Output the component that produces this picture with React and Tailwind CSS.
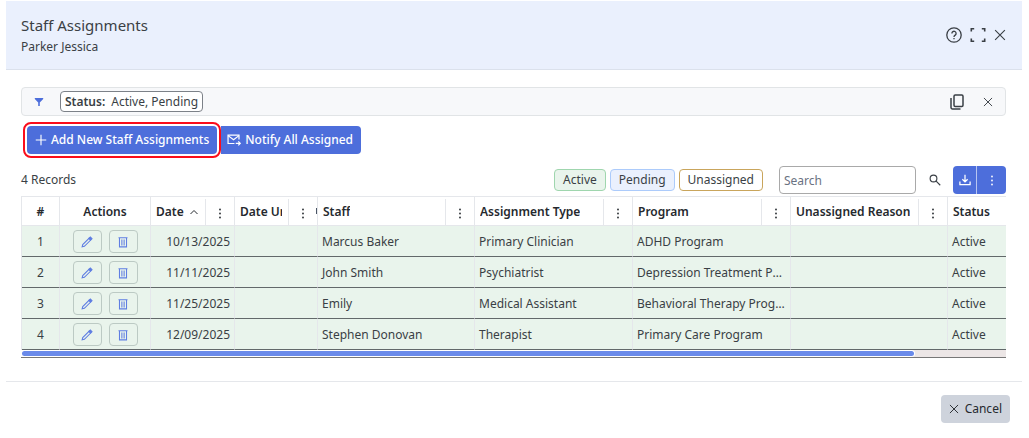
import { useState } from 'react'

const rows = [
  { id: 1, date: '10/13/2025', staff: 'Marcus Baker', type: 'Primary Clinician', program: 'ADHD Program' },
  { id: 2, date: '11/11/2025', staff: 'John Smith', type: 'Psychiatrist', program: 'Depression Treatment Program' },
  { id: 3, date: '11/25/2025', staff: 'Emily', type: 'Medical Assistant', program: 'Behavioral Therapy Program' },
  { id: 4, date: '12/09/2025', staff: 'Stephen Donovan', type: 'Therapist', program: 'Primary Care Program' },
]

function Icon({ size = 'size-4', width = 1.2, children }) {
  return (
    <svg
      viewBox="0 0 16 16"
      className={`${size} shrink-0`}
      fill="none"
      stroke="currentColor"
      strokeWidth={width}
      aria-hidden="true"
    >
      {children}
    </svg>
  )
}

const HelpIcon = () => (
  <Icon width={1.3}>
    <circle cx="8" cy="8" r="7.2" />
    <path d="M5.900 6.400a2.100 2.100 0 1 1 3.300 1.700C8.300 8.700 8 9 8 9.900" />
    <path d="M8 11v1.300" />
  </Icon>
)

const ExpandIcon = () => (
  <Icon width={1.6}>
    <path d="M1.300 4.500V1.700h2.900M11.800 1.700h2.900v2.800M14.700 11.500v2.800h-2.900M4.200 14.300H1.300v-2.800" />
  </Icon>
)

const CloseIcon = ({ size }) => (
  <Icon size={size} width={1.5}>
    <path d="M1.500 1.500l13 13M14.500 1.500l-13 13" />
  </Icon>
)

const CopyIcon = () => (
  <Icon width={1.5}>
    <rect x="5" y="1" width="9" height="11.500" rx="1.200" />
    <path d="M2 4v9.500a1.400 1.400 0 0 0 1.400 1.400h8.100" />
  </Icon>
)

const DotsIcon = () => (
  <svg viewBox="0 0 12 12" className="size-3 shrink-0" fill="currentColor" aria-hidden="true">
    <circle cx="6" cy="2.500" r="0.900" />
    <circle cx="6" cy="6.500" r="0.900" />
    <circle cx="6" cy="10.500" r="0.900" />
  </svg>
)

const PencilIcon = () => (
  <Icon size="size-3" width={1.4}>
    <path d="M1.500 14.500l.8-3L11 2.800l2.200 2.200-8.700 8.700z" />
    <path d="M10.500 3.300l2-2 2.200 2.200-2 2z" fill="currentColor" />
  </Icon>
)

const TrashIcon = () => (
  <Icon size="size-3" width={1.4}>
    <path d="M2 2.300h12M3.300 2.500v12h9.400v-12M6.500 4.500v8M9.500 4.500v8" />
  </Icon>
)

const MailIcon = () => (
  <Icon size="size-3.5" width={1.4}>
    <path d="M8.500 12H1.200V2.500h12.500v5" />
    <path d="M1.200 3l6.300 4.800 6.200-4.800" />
    <path d="M10 11.800h5M12.900 9.500l2.300 2.300-2.300 2.300" />
  </Icon>
)

function HeadCell({ label, sorted, clipped }) {
  return (
    <th scope="col" className="border-r border-b border-gray-200 p-0">
      <div className="flex h-full items-center">
        <span className="flex min-w-0 flex-1 items-center gap-1.5 pt-0.5 pr-1.5 pl-[5px]">
          <span className="min-w-0 overflow-hidden whitespace-nowrap">{label}</span>
          {sorted && (
            <Icon size="size-2" width={2}>
              <path d="M1 12l7-7 7 7" />
            </Icon>
          )}
        </span>
        <button
          type="button"
          aria-label={`${label} column menu`}
          className="flex h-[26px] w-[29px] items-center justify-center self-end border-l border-gray-200 pt-0.5"
        >
          <DotsIcon />
        </button>
        {clipped && <span className="-ml-px h-1.5 w-px bg-gray-600" />}
      </div>
    </th>
  )
}

export default function App() {
  const [search, setSearch] = useState('')

  return (
    <div className="mr-[7px] ml-1.5 pt-px font-['Noto_Sans',sans-serif] text-[12px] leading-4 text-[#3a3f45]">
      <header className="flex items-center justify-between border-b border-[#dbe1ec] bg-[#eaf0fd] py-3 pr-4 pl-[15px]">
        <div>
          <h1 className="text-[15px] leading-6">Staff Assignments</h1>
          <p className="leading-5">Parker Jessica</p>
        </div>
        <div className="flex items-center gap-2">
          <button type="button" aria-label="Help"><HelpIcon /></button>
          <button type="button" aria-label="Full screen"><ExpandIcon /></button>
          <button type="button" aria-label="Close"><CloseIcon size="size-3" /></button>
        </div>
      </header>

      <main className="pt-[17px] pr-4 pl-[15px]">
        <div className="flex h-[29px] items-center rounded-sm border border-[#e1e4e6] bg-[#f7f8fa] pr-3 pl-3">
          <svg viewBox="0 0 10 10" className="size-2.5 shrink-0 text-[#4d6edb]" fill="currentColor" aria-hidden="true">
            <path d="M.8 1h8.400v1L5.800 5.500V9H4.200V5.500L.8 2z" />
          </svg>
          <span className="ml-4 flex h-[21px] items-center gap-1.5 rounded border border-[#7c8188] bg-white px-1">
            <b className="font-semibold">Status:</b>
            Active, Pending
          </span>
          <button type="button" aria-label="Copy filter" className="ml-auto"><CopyIcon /></button>
          <button type="button" aria-label="Clear filter" className="ml-[18px]"><CloseIcon size="size-2.5" /></button>
        </div>

        <div className="mt-1.5 flex items-center">
          <div className="ml-0.5 rounded-lg border-2 border-[#fb0d1b] p-0.5">
            <button type="button" className="flex h-7 items-center gap-1 rounded bg-[#4d6edb] px-2 font-medium text-white">
              <Icon size="size-3" width={1.5}>
                <path d="M8 1v14M1 8h14" />
              </Icon>
              Add New Staff Assignments
            </button>
          </div>
          <button type="button" className="flex h-7 items-center gap-1 rounded-r bg-[#4d6edb] pr-2 pl-1.5 font-medium text-white">
            <MailIcon />
            Notify All Assigned
          </button>
        </div>

        <div className="mt-2 mb-0.5 flex h-7 items-center">
          <span>4 Records</span>
          <div className="ml-auto flex items-center gap-1">
            <span className="rounded border border-[#9fd6ae] bg-[#e9f4ec] px-2 py-0.5">Active</span>
            <span className="rounded border border-[#accbfb] bg-[#eaf0fd] px-2 py-0.5">Pending</span>
            <span className="rounded border border-[#c9a55c] bg-white px-2 py-0.5">Unassigned</span>
          </div>
          <input
            type="text"
            aria-label="Search"
            placeholder="Search"
            value={search}
            onChange={e => setSearch(e.target.value)}
            className="ml-4 h-7 w-[137px] rounded border border-[#a9a9a9] px-1 placeholder:text-gray-500"
          />
          <button type="button" aria-label="Run search" className="flex w-[37px] justify-center">
            <Icon size="size-3" width={1.5}>
              <circle cx="6" cy="6" r="4.500" />
              <path d="M9.500 9.500l5.500 5.500" />
            </Icon>
          </button>
          <div className="flex h-7 divide-x divide-white/60 overflow-hidden rounded bg-[#4d6edb] text-white">
            <button type="button" aria-label="Download" className="flex w-6 items-center justify-center">
              <Icon size="size-3" width={1.7}>
                <path d="M8 1v9M4.500 7L8 10.500 11.500 7M1.200 10v4.300h13.600V10" />
              </Icon>
            </button>
            <button type="button" aria-label="More options" className="flex w-[29px] items-center justify-center">
              <DotsIcon />
            </button>
          </div>
        </div>

        <div className="overflow-hidden border-b border-[#777]">
          <table className="w-full table-fixed border-separate border-spacing-0 border-t border-l border-gray-200">
            <colgroup>
              <col className="w-[38px]" />
              <col className="w-[91px]" />
              <col className="w-[84px]" />
              <col className="w-[83px]" />
              <col className="w-[157px]" />
              <col className="w-[158px]" />
              <col className="w-[158px]" />
              <col className="w-[157px]" />
              <col />
            </colgroup>
            <thead>
              <tr className="text-left text-[#25292e] [&>th]:h-[29px] [&>th]:font-semibold">
                <th scope="col" className="border-r border-b border-gray-200 pt-0.5 text-center">#</th>
                <th scope="col" className="border-r border-b border-gray-200 pt-0.5 text-center">Actions</th>
                <HeadCell label="Date" sorted />
                <HeadCell label="Date Unassigned" clipped />
                <HeadCell label="Staff" />
                <HeadCell label="Assignment Type" />
                <HeadCell label="Program" />
                <HeadCell label="Unassigned Reason" />
                <th scope="col" className="border-b border-gray-200 pt-0.5 pl-[5px]">Status</th>
              </tr>
            </thead>
            <tbody className="bg-[#e9f4ec] [&_td]:h-[31px] [&_td]:truncate [&_td]:border-r [&_td]:border-b [&_td]:border-r-gray-200 [&_td]:border-b-[#62686a] [&_td]:px-1 [&_td]:pt-px [&_td:last-child]:border-r-0">
              {rows.map(row => (
                <tr key={row.id}>
                  <td className="text-center">{row.id}</td>
                  <td>
                    <div className="flex justify-center gap-[7px]">
                      <button
                        type="button"
                        aria-label={`Edit ${row.staff}`}
                        className="flex h-[23px] w-[29px] items-center justify-center rounded border border-[#bccac4] text-[#5f7ee2]"
                      >
                        <PencilIcon />
                      </button>
                      <button
                        type="button"
                        aria-label={`Delete ${row.staff}`}
                        className="flex h-[23px] w-[29px] items-center justify-center rounded border border-[#bccac4] text-[#5f7ee2]"
                      >
                        <TrashIcon />
                      </button>
                    </div>
                  </td>
                  <td className="text-right">{row.date}</td>
                  <td />
                  <td>{row.staff}</td>
                  <td>{row.type}</td>
                  <td>{row.program}</td>
                  <td />
                  <td>Active</td>
                </tr>
              ))}
            </tbody>
          </table>
          <div className="h-[7px] bg-[#ece6e6]">
            <div className="mr-[91px] h-full rounded-r-full bg-white p-px">
              <div className="h-full rounded-full bg-[#6a8aea]" />
            </div>
          </div>
        </div>
      </main>

      <footer className="mt-[23px] flex justify-end border-t border-gray-200 px-3 py-[13px]">
        <button type="button" className="flex h-7 items-center gap-1.5 rounded bg-[#ced3dc] px-2 text-[#25292e]">
          <CloseIcon size="size-2.5" />
          Cancel
        </button>
      </footer>
    </div>
  )
}
